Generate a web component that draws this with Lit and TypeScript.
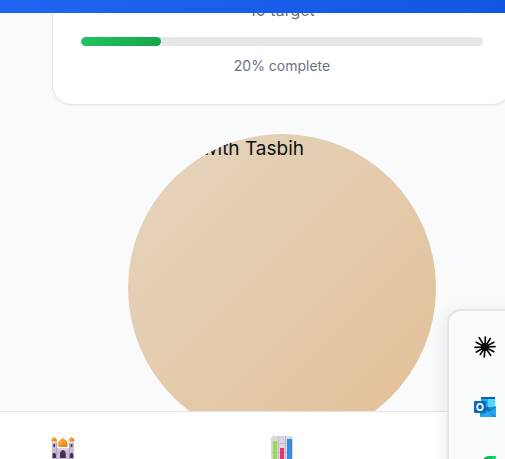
import { LitElement, html, css, svg } from "lit";
import { customElement, property } from "lit/decorators.js";

const mosque = html`<svg class="icon" viewBox="0 0 24 24" aria-hidden="true">
  <defs>
    <linearGradient id="gold" x1="0" y1="0" x2="1" y2="1">
      <stop offset="0" stop-color="#ffc34a" /><stop offset="1" stop-color="#d97a24" />
    </linearGradient>
  </defs>
  <path fill="#c9bdd2" d="M1 6h5v6h13V6h4v18H1z" />
  <path fill="#b3a4c0" d="M5 7h1v17H5zM18 7h1v17h-1z" />
  <path fill="#ddd4e3" d="M7 12h10v2H7zM1 6h4v1H1zM19 6h4v1h-4z" />
  <path fill="url(#gold)" d="M3 0l.6 1.600C5.300 2.500 6.500 3.500 6 5.500H.5C0 3.500.8 2.500 2.400 1.600z" />
  <path fill="url(#gold)" d="M20.500 0l.6 1.600C22.800 2.500 23.800 3.500 23.300 5.500h-5.500c-.5-2 .5-3 2.100-3.900z" />
  <path fill="url(#gold)" d="M11.800 1l.7 1.600C15.500 4.200 17.800 6.500 16.200 11H7.400C5.800 6.500 8.200 4.200 11.100 2.600z" />
  <path fill="#4b2c5c" d="M2.300 8h1.600v3H2.300zM19.800 8h1.600v3h-1.600zM9 22v-4c0-2 1.300-3.500 2.900-4 1.600.5 2.900 2 2.900 4v4zM1.500 22v-3c.5-3 3-3 3.500 0v3zM18.800 22v-3c.5-3 3-3 3.500 0v3z" />
</svg>`;

const chart = html`<svg class="icon" viewBox="0 0 24 24" aria-hidden="true">
  <rect x="1" width="22" height="24" rx="3" fill="#dcd6e0" />
  <path stroke="#c3bbca" fill="none" d="M1 7.500h22M1 16.500h22M8.500 0v24M15.500 0v24" />
  <rect x="3" y="5" width="4" height="18" fill="#98dc55" />
  <rect x="10" y="12" width="4" height="11" fill="#e8336f" />
  <rect x="17" y="3" width="5" height="20" fill="#3490df" />
</svg>`;

const rays = [
  [2, 10], [32, 10], [62, 10], [88, 10], [118, 10], [146, 10],
  [184, 10], [212, 9], [240, 10], [268, 10], [298, 10], [328, 11],
];

const burst = html`<svg class="app-icon" viewBox="0 0 22 22" aria-hidden="true">
  <g stroke="#080808" stroke-width="1.700" stroke-linecap="round">
    ${rays.map(([a, l]) => svg`<line x1="11" y1="11" x2="11" y2=${11 - l} transform="rotate(${a} 11 11)" />`)}
  </g>
  <circle cx="11" cy="11" r="4" fill="#080808" />
</svg>`;

const mail = html`<svg class="app-icon" viewBox="0 0 22 22" aria-hidden="true">
  <rect x="7" y="1" width="14" height="20" fill="#1490df" />
  <rect x="7" y="1" width="14" height="2" fill="#0d62ad" />
  <rect x="7" y="3" width="7" height="8" fill="#28a8ea" />
  <rect x="14" y="3" width="7" height="8" fill="#50d9ff" />
  <path fill="#1b9de2" d="M6 10l16 11H6z" />
  <path fill="#2aa7ea" d="M22 10v11H6z" />
  <path fill="#0f6ab8" d="M12 11h2l2 3-2 1-2-1z" />
  <path fill="#1479c9" d="M14 15l8-5v1l-7 5 7 5H20z" />
  <rect y="5" width="12" height="12" rx="1" fill="#0b6abf" />
  <ellipse cx="6" cy="11" rx="2.800" ry="3.100" fill="none" stroke="#fff" stroke-width="1.700" />
</svg>`;

const leaf = html`<svg class="app-icon" viewBox="0 0 22 22" aria-hidden="true">
  <defs>
    <linearGradient id="leaf"><stop offset="0.300" stop-color="#079447" /><stop offset="0.800" stop-color="#0fd865" /></linearGradient>
  </defs>
  <path fill="url(#leaf)" d="M15 0h8l-5 9c-1 3-3 4-6 4H3l6-9c1-2 3-4 6-4z" />
</svg>`;

@customElement("progress-card")
class ProgressCard extends LitElement {
  @property({ type: Number }) target = 10;
  @property({ type: Number }) percent = 20;

  static styles = css`
    :host {
      display: block;
      box-sizing: border-box;
      padding: 28px;
      border: 1px solid #e2e8f0;
      border-radius: 20px;
      background: #fff;
      box-shadow: 0 1px 2px #0000000d;
      color: #6b7280;
      text-align: center;
    }
    .target {
      font-size: 16px;
      line-height: 24px;
    }
    .track {
      height: 9px;
      margin: 15px 0 9px;
      border-radius: 5px;
      background: #e5e7eb;
      overflow: hidden;
    }
    .fill {
      height: 100%;
      border-radius: 5px;
      background: linear-gradient(135deg, #22c55e, #16a34a);
    }
    .status {
      font-size: 14px;
      line-height: 21px;
    }
  `;

  render() {
    return html`
      <div class="target">${this.target} target</div>
      <div class="track" role="progressbar" aria-label="Progress" aria-valuenow=${this.percent}>
        <div class="fill" style="width:${this.percent}%"></div>
      </div>
      <div class="status">${this.percent}% complete</div>
    `;
  }
}

@customElement("app-root")
class AppRoot extends LitElement {
  static styles = css`
    :host {
      position: relative;
      display: flex;
      flex-direction: column;
      height: 100vh;
      overflow: hidden;
      background: #f9fafc;
      color: #111827;
      font-family: Inter, "Liberation Sans", sans-serif;
    }
    header {
      flex: none;
      height: 13px;
      background: linear-gradient(135deg, #2065f1, #1257e2);
      z-index: 1;
    }
    main {
      flex: 1;
      min-height: 0;
      margin-right: -7px;
      padding-left: 52px;
      overflow: hidden;
    }
    progress-card {
      margin-top: -44px;
    }
    .figure {
      box-sizing: border-box;
      width: 308px;
      height: 308px;
      margin: 29px auto 0;
      padding: 3px 0 0 74px;
      border-radius: 50%;
      overflow: hidden;
      background: linear-gradient(135deg, #e5d5bf, #e3bf96);
      color: #0b0f14;
      font-size: 19px;
      line-height: 24px;
    }
    nav {
      flex: none;
      display: flex;
      justify-content: space-between;
      height: 47px;
      margin-right: -7px;
      border-top: 1px solid #e2e4e9;
      background: #fff;
    }
    .tab {
      display: flex;
      justify-content: center;
      align-items: flex-start;
      width: 126px;
      padding: 24px 0 0;
      border: 0;
      background: none;
    }
    .tab:last-child {
      margin-right: -52px;
    }
    .icon {
      flex: none;
      width: 24px;
      height: 24px;
    }
    .dock {
      position: absolute;
      z-index: 2;
      top: 309px;
      right: -16px;
      bottom: -24px;
      box-sizing: border-box;
      width: 74px;
      display: flex;
      flex-direction: column;
      align-items: flex-start;
      gap: 38px;
      padding: 25px 0 0 25px;
      border: 2px solid #e4e5e7;
      border-radius: 14px;
      background: #fafbfb;
      box-shadow: 0 4px 18px #00000018;
    }
    .app {
      display: block;
      padding: 0;
      border: 0;
      background: none;
    }
    .app-icon {
      display: block;
      width: 22px;
      height: 22px;
    }
  `;

  render() {
    return html`
      <header></header>
      <main>
        <progress-card></progress-card>
        <div class="figure">with Tasbih</div>
      </main>
      <nav>
        <button class="tab" aria-label="Mosque">${mosque}</button>
        <button class="tab" aria-label="Statistics">${chart}</button>
        <span class="tab"></span>
      </nav>
      <aside class="dock">
        <button class="app" aria-label="Assistant">${burst}</button>
        <button class="app" aria-label="Mail">${mail}</button>
        <button class="app" aria-label="Notes">${leaf}</button>
      </aside>
    `;
  }
}
